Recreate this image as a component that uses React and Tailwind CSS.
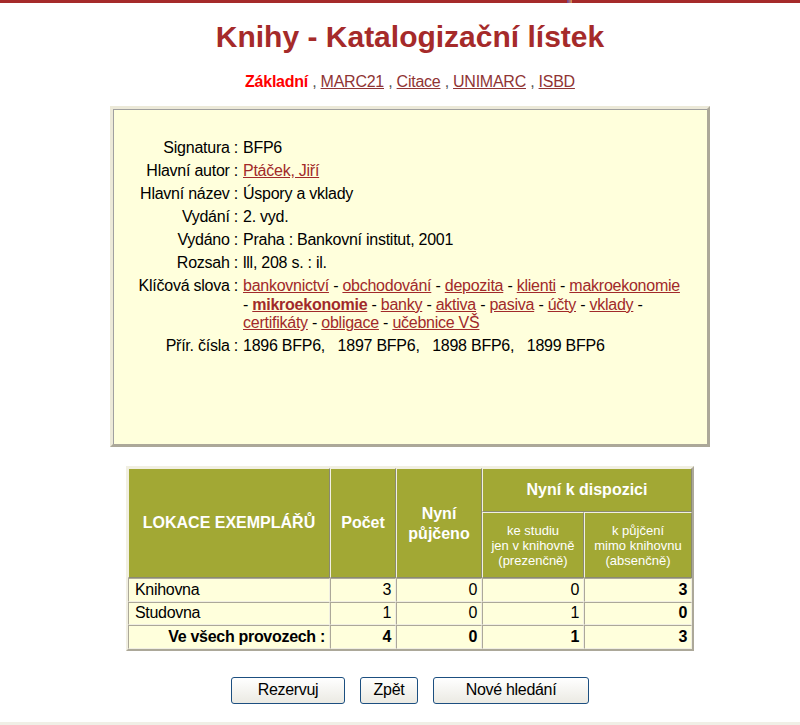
import React from 'react';

const font = { fontFamily: '"Liberation Sans", Arial, sans-serif' };

const rows = [
    { label: 'Signatura :', value: 'BFP6' },
    { label: 'Hlavní autor :', value: <a className="text-[#a12a2a] underline">Ptáček, Jiří</a> },
    { label: 'Hlavní název :', value: 'Úspory a vklady' },
    { label: 'Vydání :', value: '2. vyd.' },
    { label: 'Vydáno :', value: 'Praha : Bankovní institut, 2001' },
    { label: 'Rozsah :', value: 'lll, 208 s. : il.' },
];

const keywords = [
    'bankovnictví', 'obchodování', 'depozita', 'klienti', 'makroekonomie',
    'mikroekonomie', 'banky', 'aktiva', 'pasiva', 'účty', 'vklady',
    'certifikáty', 'obligace', 'učebnice VŠ',
];

const Keywords = () => (
    <>
        {keywords.map((k, i) => (
            <React.Fragment key={k}>
                {i > 0 && ' - '}
                <a className={`text-[#a12a2a] underline ${k === 'mikroekonomie' ? 'font-bold' : ''}`}>{k}</a>
            </React.Fragment>
        ))}
    </>
);

const hd = 'bg-[#a2a834] text-white font-bold border border-t-[#f1efe2] border-l-[#f1efe2] border-b-[#8a8a70] border-r-[#8a8a70] text-center align-middle';
const td = 'bg-[#ffffdc] border border-t-[#aca899] border-l-[#aca899] border-b-[#f1efe2] border-r-[#f1efe2] px-[4px] h-[23.5px] leading-[18px]';

const holdings = [
    { loc: 'Knihovna', count: 3, lent: 0, pres: 0, abs: 3 },
    { loc: 'Studovna', count: 1, lent: 0, pres: 1, abs: 0 },
];

const Button = ({ children, w }) => (
    <button className={`${w} h-[27px] text-[16px] tracking-[-0.3px] text-black rounded-[3px] border border-[#1c4f80] bg-gradient-to-b from-white to-[#ebeae3]`}>
        {children}
    </button>
);

export default function App() {
    return (
        <div className="w-[800px] h-[725px] bg-white text-black overflow-hidden flex flex-col" style={font}>
            <div className="h-[3px] bg-[#a52a2a] flex shrink-0">
                <div className="ml-[567px] w-[5px] h-[3px] bg-gradient-to-r from-[#6a3a9a] to-[#e09030]"></div>
            </div>

            <div className="pl-[20px] flex flex-col items-center">
                <h1 className="mt-[17px] text-[30px] font-bold text-[#a52a2a] leading-[34px]">
                    Knihy - Katalogizační lístek
                </h1>

                <div className="mt-[19px] text-[16px] leading-[18px] tracking-[-0.25px] text-[#555]">
                    <span className="font-bold text-[#ff0000]">Základní</span> ,{' '}
                    <a className="text-[#8f3434] underline">MARC21</a> ,{' '}
                    <a className="text-[#8f3434] underline">Citace</a> ,{' '}
                    <a className="text-[#8f3434] underline">UNIMARC</a> ,{' '}
                    <a className="text-[#8f3434] underline">ISBD</a>
                </div>

                {/* katalogizacni listek */}
                <div className="mt-[15px] w-[600px] h-[341px] border-[3px] border-t-[#ece9d8] border-l-[#ece9d8] border-b-[#aca899] border-r-[#aca899]">
                    <div className="h-full bg-[#ffffdc] border-t border-l border-[#a0a0a0] pt-[27px] text-[16px] leading-[18.5px] tracking-[-0.25px]">
                        {rows.map((r) => (
                            <div key={r.label} className="flex py-[2.25px]">
                                <div className="w-[124px] shrink-0 text-right">{r.label}</div>
                                <div className="pl-[5px] w-[455px]">{r.value}</div>
                            </div>
                        ))}
                        <div className="flex py-[2.25px]">
                            <div className="w-[124px] shrink-0 text-right">Klíčová slova :</div>
                            <div className="pl-[5px] w-[446px]"><Keywords /></div>
                        </div>
                        <div className="flex py-[2.25px]">
                            <div className="w-[124px] shrink-0 text-right">Přír. čísla :</div>
                            <div className="pl-[5px] w-[455px] whitespace-pre">1896 BFP6,   1897 BFP6,   1898 BFP6,   1899 BFP6</div>
                        </div>
                    </div>
                </div>

                {/* exemplare */}
                <table className="mt-[19px] w-[568px] border-separate border-spacing-0 border-2 border-t-[#f1efe2] border-l-[#f1efe2] border-b-[#aca899] border-r-[#aca899] text-[16px]">
                    <thead>
                        <tr>
                            <th rowSpan={2} className={`${hd} w-[202px] text-[16px]`}>LOKACE EXEMPLÁŘŮ</th>
                            <th rowSpan={2} className={`${hd} w-[66px] text-[16px]`}>Počet</th>
                            <th rowSpan={2} className={`${hd} w-[86px] text-[16px] leading-[20px] pt-[2px]`}>Nyní<br />půjčeno</th>
                            <th colSpan={2} className={`${hd} h-[44px] text-[16px]`}>Nyní k dispozici</th>
                        </tr>
                        <tr>
                            <th className={`${hd} w-[102px] h-[66px] text-[13px] font-normal leading-[15px]`}>
                                ke studiu<br />jen v knihovně<br />(prezenčně)
                            </th>
                            <th className={`${hd} w-[108px] h-[66px] text-[13px] font-normal leading-[15px]`}>
                                k půjčení<br />mimo knihovnu<br />(absenčně)
                            </th>
                        </tr>
                    </thead>
                    <tbody className="tracking-[-0.3px]">
                        {holdings.map((h) => (
                            <tr key={h.loc}>
                                <td className={`${td} text-left pl-[6px]`}>{h.loc}</td>
                                <td className={`${td} text-right`}>{h.count}</td>
                                <td className={`${td} text-right`}>{h.lent}</td>
                                <td className={`${td} text-right`}>{h.pres}</td>
                                <td className={`${td} text-right font-bold`}>{h.abs}</td>
                            </tr>
                        ))}
                        <tr className="font-bold">
                            <td className={`${td} text-right`}>Ve všech provozech :</td>
                            <td className={`${td} text-right`}>4</td>
                            <td className={`${td} text-right`}>0</td>
                            <td className={`${td} text-right`}>1</td>
                            <td className={`${td} text-right`}>3</td>
                        </tr>
                    </tbody>
                </table>

                <div className="mt-[26px] flex gap-[15px]">
                    <Button w="w-[114px]">Rezervuj</Button>
                    <Button w="w-[58px]">Zpět</Button>
                    <Button w="w-[156px]">Nové hledání</Button>
                </div>
            </div>

            <div className="mt-auto h-[3px] bg-[#f0efe6] shrink-0"></div>
        </div>
    );
}
